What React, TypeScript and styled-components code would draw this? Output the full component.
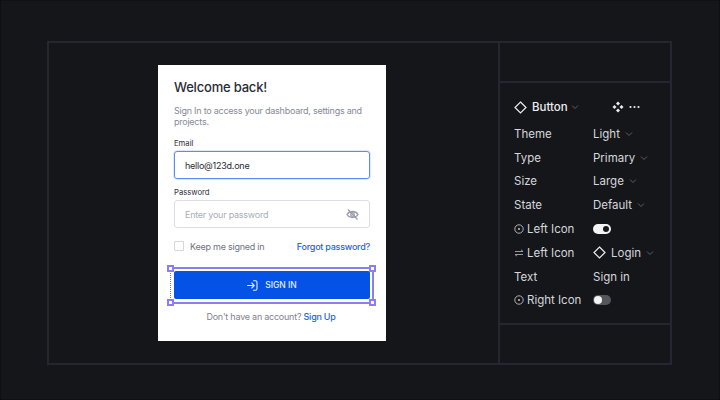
import React from "react";
import styled, { createGlobalStyle } from "styled-components";

const Global = createGlobalStyle`
  html, body { margin: 0; padding: 0; background: #14161a; }
  * { box-sizing: border-box; }
`;
const Screen = styled.div`
  width: 720px; height: 400px; background: #14161a; border: 1px solid #0e0f12; border-top-color:#101114;
  padding: 40px 47px 34px 46px; font-family: Inter, "Liberation Sans", sans-serif; overflow: hidden;
`;
const Frame = styled.div`
  width: 625px; height: 324px; border: 2px solid #25262f; display: flex;
`;
const Canvas = styled.div`
  width: 451px; display: flex; padding: 22px 0 0 109px; border-right: 2px solid #25262f; flex: none;
`;
const Card = styled.div`
  width: 228px; height: 276px; background: #fff; padding: 13px 16px 0 16px; display: flex; flex-direction: column;
`;
const Title = styled.h1`
  margin: 0; font-size: 13px; line-height: 18px; font-weight: 500; color: #2a2c35; letter-spacing: -0.2px;
`;
const Sub = styled.p`
  margin: 8.5px 0 0; font-size: 9px; line-height: 11.5px; color: #858a95; letter-spacing: -0.24px;
`;
const Label = styled.label<{ $top: number }>`
  display: block; font-size: 7.7px; line-height: 10px; color: #2b2e38; margin-top: ${p => p.$top}px; margin-bottom: 2px;
`;
const Input = styled.div<{ $focus?: boolean }>`
  height: 28px; width: 196px; border-radius: 3px; padding: 0 10px; display: flex; align-items: center; justify-content: space-between;
  font-size: 9px; letter-spacing: -0.24px; color: ${p => p.$focus ? "#272a33" : "#a9adb6"};
  border: 1px solid ${p => p.$focus ? "#5b8cf2" : "#dcdee4"};
  box-shadow: ${p => p.$focus ? "0 0 0 1px #dfe8fb" : "none"};
`;
const Options = styled.div`
  display: flex; justify-content: space-between; align-items: center; margin-top: 11px; height: 14px;
`;
const Keep = styled.div`
  display: flex; align-items: center; gap: 6px; font-size: 9px; letter-spacing: -0.24px; color: #70747f;
`;
const Check = styled.span`
  width: 10px; height: 10px; border: 1px solid #d5d7dd; border-radius: 1px; display: block;
`;
const Link = styled.span`
  color: #2763e5; font-size: 9px; letter-spacing: -0.24px; font-weight: 500;
`;
const Selection = styled.div`
  position: relative; width: 204px; height: 37px; margin: 14px 0 0 -4px; border: 2px solid #8c7df2; border-left: 1px dotted #7c68f0; padding: 2px 0 0 3px; flex: none;
`;
const Handle = styled.i<{ $x: string; $y: string }>`
  position: absolute; width: 7px; height: 7px; background: #fff; border: 2px solid #8c7df2;
  ${p => p.$x}: -4px; ${p => p.$y}: -4px;
`;
const Primary = styled.div`
  width: 196px; height: 28px; background: #0452e6; border-radius: 2px; color: #e6edfc; display: flex; align-items: center; justify-content: center; gap: 7px;
  font-size: 8.5px; font-weight: 500;
`;
const Foot = styled.div`
  text-align: center; font-size: 9px; letter-spacing: -0.24px; color: #7f838e; margin-top: 7px; padding-right: 2px;
`;
const Side = styled.div`
  flex: 1; display: flex; flex-direction: column;
`;
const Band = styled.div`
  height: 38px; flex: none;
`;
const Panel = styled.div`
  height: 244px; flex: none; border-top: 2px solid #25262f; border-bottom: 2px solid #25262f; padding: 14px 0 0 14px;
`;
const Head = styled.div`
  display: flex; align-items: center; height: 20px; margin-bottom: 5px; color: #ededf0; font-size: 11.5px; font-weight: 500;
`;
const HeadName = styled.span`
  margin-left: 5px;
`;
const HeadIcons = styled.div`
  display: flex; align-items: center; gap: 5px; margin-left: 33px;
`;
const Row = styled.div`
  display: flex; align-items: center; height: 23.8px; font-size: 11.5px; color: #d6d7db;
`;
const Name = styled.div`
  width: 79px; flex: none; display: flex; align-items: center; gap: 3px;
`;
const Value = styled.div`
  display: flex; align-items: center; gap: 5px;
`;
const Toggle = styled.span<{ $on?: boolean }>`
  position: relative; display: block; width: 18px; height: 10px; border-radius: 5px; background: ${p => p.$on ? "#f4f4f6" : "#55565c"};
  &::after {
    content: ""; position: absolute; top: ${p => p.$on ? 2 : 1}px; width: ${p => p.$on ? 6 : 8}px; height: ${p => p.$on ? 6 : 8}px; border-radius: 50%;
    background: ${p => p.$on ? "#17181c" : "#f4f4f6"}; ${p => p.$on ? "right: 2px" : "left: 1px"};
  }
`;

const Chevron = () => (
  <svg width="8" height="8" viewBox="0 0 8 8" fill="none" stroke="#5d5f67" strokeWidth="1"><path d="M1 2.5 4 5.5 7 2.5" /></svg>
);
const Diamond = () => (
  <svg width="13" height="13" viewBox="0 0 13 13" fill="none" stroke="#ededf0" strokeWidth="1.2"><path d="M6.5 1 12 6.5 6.5 12 1 6.5Z" /></svg>
);
const Target = () => (
  <svg width="10" height="10" viewBox="0 0 10 10" fill="none" stroke="#d6d7db" strokeWidth=".8"><circle cx="5" cy="5" r="4.2" /><circle cx="5" cy="5" r=".9" fill="#d6d7db" stroke="none" /></svg>
);
const Swap = () => (
  <svg width="10" height="10" viewBox="0 0 10 10" fill="none" stroke="#a8a9ae" strokeWidth=".9"><path d="M1 3.5H9M7 1.8 9 3.5M9 6.5H1M3 8.2 1 6.5" /></svg>
);
const Component = () => (
  <svg width="12" height="12" viewBox="0 0 12 12" fill="#ededf0"><path d="M6 .5 8 2.5 6 4.5 4 2.5ZM6 7.5 8 9.5 6 11.5 4 9.5ZM2.5 4 4.5 6 2.5 8 .5 6ZM9.5 4 11.5 6 9.5 8 7.5 6Z" /></svg>
);
const Dots = () => (
  <svg width="11" height="4" viewBox="0 0 11 4" fill="#ededf0"><circle cx="1.5" cy="2" r="1.1" /><circle cx="5.5" cy="2" r="1.1" /><circle cx="9.5" cy="2" r="1.1" /></svg>
);
const EyeOff = () => (
  <svg width="13" height="13" viewBox="0 0 13 13" fill="none" stroke="#9a9ea8" strokeWidth="1.3"><path d="M1 6.5C3.5 2.5 9.5 2.5 12 6.5 9.5 10.5 3.5 10.5 1 6.5Z" /><circle cx="6.5" cy="6.5" r="1.8" /><path d="M2 1.5 11.5 11.5" /></svg>
);
const Login = () => (
  <svg width="11" height="11" viewBox="0 0 11 11" fill="none" stroke="#e6edfc" strokeWidth="1.1" strokeLinecap="round" strokeLinejoin="round"><path d="M.6 5.5H7M4.8 3 7.2 5.5 4.8 8M6.5 .8H8.5Q10 .8 10 2.3V8.7Q10 10.2 8.5 10.2H6.5" /></svg>
);

const rows: [string, string][] = [["Theme", "Light"], ["Type", "Primary"], ["Size", "Large"], ["State", "Default"]];

export default function App() {
  return (
    <Screen>
      <Global />
      <Frame>
        <Canvas>
          <Card>
            <Title>Welcome back!</Title>
            <Sub>Sign In to access your dashboard, settings and projects.</Sub>
            <Label $top={11.5}>Email</Label>
            <Input $focus>hello@123d.one</Input>
            <Label $top={9}>Password</Label>
            <Input>Enter your password<EyeOff /></Input>
            <Options>
              <Keep><Check />Keep me signed in</Keep>
              <Link>Forgot password?</Link>
            </Options>
            <Selection>
              <Handle $x="left" $y="top" /><Handle $x="right" $y="top" />
              <Handle $x="left" $y="bottom" /><Handle $x="right" $y="bottom" />
              <Primary><Login />SIGN IN</Primary>
            </Selection>
            <Foot>Don't have an account? <Link>Sign Up</Link></Foot>
          </Card>
        </Canvas>
        <Side>
          <Band />
          <Panel>
            <Head>
              <Diamond /><HeadName>Button</HeadName>&nbsp;<Chevron />
              <HeadIcons><Component /><Dots /></HeadIcons>
            </Head>
            {rows.map(([n, v]) => (
              <Row key={n}><Name>{n}</Name><Value>{v}<Chevron /></Value></Row>
            ))}
            <Row><Name><Target />Left Icon</Name><Toggle $on /></Row>
            <Row><Name><Swap />Left Icon</Name><Value><Diamond />Login<Chevron /></Value></Row>
            <Row><Name>Text</Name><Value>Sign in</Value></Row>
            <Row><Name><Target />Right Icon</Name><Toggle /></Row>
          </Panel>
          <Band />
        </Side>
      </Frame>
    </Screen>
  );
}
